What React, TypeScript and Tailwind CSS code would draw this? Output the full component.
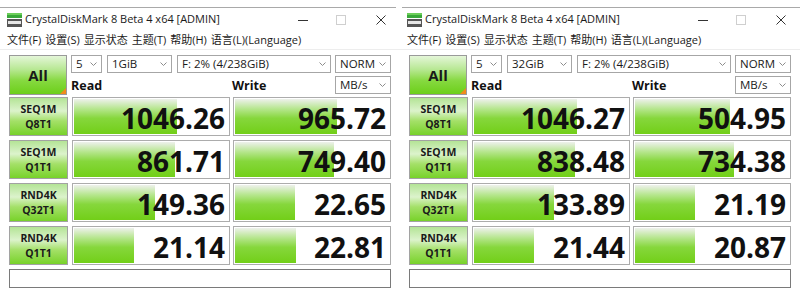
const TESTS = [
  ["SEQ1M", "Q8T1"],
  ["SEQ1M", "Q1T1"],
  ["RND4K", "Q32T1"],
  ["RND4K", "Q1T1"],
];

const WINDOWS = [
  {
    size: "1GiB",
    results: [
      ["1046.26", "965.72"],
      ["861.71", "749.40"],
      ["149.36", "22.65"],
      ["21.14", "22.81"],
    ],
  },
  {
    size: "32GiB",
    results: [
      ["1046.27", "504.95"],
      ["838.48", "734.38"],
      ["133.89", "21.19"],
      ["21.44", "20.87"],
    ],
  },
];

function Chevron() {
  return (
    <svg width="7" height="4" viewBox="0 0 7 4">
      <polyline points="0.5,0.5 3.5,3.5 6.5,0.5" fill="none" stroke="#8c8c8c" strokeWidth="1" />
    </svg>
  );
}

function Combo({ value, width }: { value: string; width: string }) {
  return (
    <div
      className={`flex h-[18px] items-center justify-between border border-[#a6a6a6] bg-white pl-[4px] pr-[4px] text-[11.5px] font-normal leading-none text-[#1a1a1a] ${width}`}
    >
      <span>{value}</span>
      <Chevron />
    </div>
  );
}

function AppIcon() {
  return (
    <svg width="15" height="14" viewBox="0 0 15 14">
      <rect x="0" y="0" width="15" height="5" fill="#3aa83a" />
      <rect x="0" y="0" width="15" height="2" fill="#6cce5a" />
      <rect x="0" y="6" width="15" height="8" fill="#555" />
      <rect x="1" y="8" width="13" height="3" fill="#e6e6e6" />
    </svg>
  );
}

function Meter({ value }: { value: string }) {
  const ratio = Math.min(1, Math.log10(parseFloat(value) * 10) / 6);
  return (
    <div className="relative h-full w-[158px] border border-[#acacac] bg-white p-px">
      <div
        className="h-full bg-[linear-gradient(to_bottom,#eef1ec_0%,#b6e68e_28%,#86d73c_55%,#72cf18_100%)]"
        style={{ width: `${ratio * 100}%` }}
      />
      <span className="absolute right-[4px] top-[1px] text-[28px] font-bold leading-[38px] text-[#111]">
        {value}
      </span>
    </div>
  );
}

function Window({ size, results, first }: { size: string; results: string[][]; first: boolean }) {
  return (
    <div className="w-[400px] bg-white">
      <div className="h-[7px]" />
      <div className={`h-px bg-[#a9a9a9] ${first ? "mr-[4px]" : "ml-[2px]"}`} />
      <div className="flex h-[23px] items-center pl-[7px] pr-[14px]">
        <AppIcon />
        <span className="ml-[3px] flex-1 text-[11px] text-[#1a1a1a]">CrystalDiskMark 8 Beta 4 x64 [ADMIN]</span>
        <svg width="10" height="10" viewBox="0 0 10 10" className="mr-[28px]">
          <line x1="0" y1="5.5" x2="10" y2="5.5" stroke="#333" strokeWidth="1" />
        </svg>
        <svg width="10" height="10" viewBox="0 0 10 10" className="mr-[30px]">
          <rect x="0.5" y="0.5" width="9" height="9" fill="none" stroke="#cfcfcf" strokeWidth="1" />
        </svg>
        <svg width="10" height="10" viewBox="0 0 10 10">
          <path d="M0.5 0.5 L9.5 9.5 M9.5 0.5 L0.5 9.5" stroke="#333" strokeWidth="1" />
        </svg>
      </div>
      <div className="flex h-[18px] items-center gap-[4px] pl-[7px] text-[11px] text-[#1a1a1a]">
        <span>文件(F)</span>
        <span>设置(S)</span>
        <span>显示状态</span>
        <span>主题(T)</span>
        <span>帮助(H)</span>
        <span>语言(L)(Language)</span>
      </div>
      <div className="h-px bg-[#ededed]" />

      <div className="px-[9px] pt-[5px]">
        <div className="flex gap-[4px]">
          <div className="relative flex h-[40px] w-[59px] items-center justify-center border border-[#9a9a9a] bg-[linear-gradient(to_bottom,#e4f6d8_0%,#b8e894_35%,#86d940_65%,#6ccf1a_100%)] text-[15px] font-bold text-[#1a1a1a]">
            All
            <div className="absolute bottom-0 right-0 h-0 w-0 border-b-[6px] border-l-[6px] border-b-[#f28a1c] border-l-transparent" />
          </div>
          <div className="flex flex-1 flex-col gap-[3px]">
            <div className="flex gap-[5px]">
              <Combo value="5" width="w-[31px]" />
              <Combo value={size} width="w-[65px]" />
              <Combo value="F: 2% (4/238GiB)" width="w-[154px]" />
              <Combo value="NORM" width="ml-[-1px] w-[56px]" />
            </div>
            <div className="flex h-[18px] items-end text-[12.5px] font-bold leading-none text-[#111]">
              <span className="w-[161px] pb-[2px]">Read</span>
              <span className="flex-1 pb-[2px]">Write</span>
              <Combo value="MB/s" width="w-[56px]" />
            </div>
          </div>
        </div>

        <div className="mt-[2px] flex flex-col gap-[4px]">
          {TESTS.map((t, i) => (
            <div key={i} className="flex h-[39px]">
              <div className="flex w-[59px] flex-col items-center justify-center border border-[#a2a2a2] bg-[linear-gradient(to_bottom,#b4e496_0%,#dcf3cc_35%,#a4e068_62%,#78d22a_100%)] text-[10.5px] font-bold leading-[15px] text-[#1a1a1a]">
                <span>{t[0]}</span>
                <span>{t[1]}</span>
              </div>
              <div className="ml-[4px]">
                <Meter value={results[i][0]} />
              </div>
              <div className="ml-[3px]">
                <Meter value={results[i][1]} />
              </div>
            </div>
          ))}
        </div>

        <div className="mt-[4px] h-[19px] w-[382px] border border-[#7a7a7a] bg-white" />
      </div>
    </div>
  );
}

export default function App() {
  return (
    <div className="flex h-[291px] w-[800px] overflow-hidden bg-white font-['Open_Sans','Noto_Sans_CJK_SC',sans-serif]">
      {WINDOWS.map((w, i) => (
        <Window key={i} size={w.size} results={w.results} first={i === 0} />
      ))}
    </div>
  );
}
